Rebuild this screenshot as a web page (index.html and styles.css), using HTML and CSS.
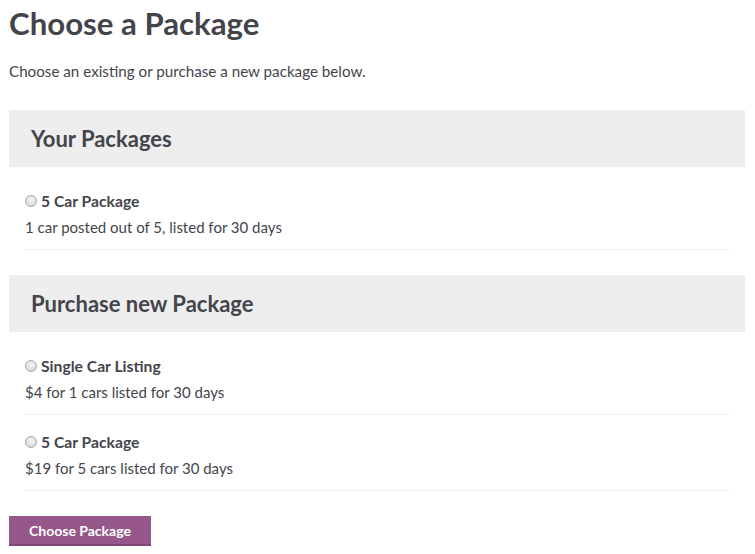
FILE: index.html
```html
<!DOCTYPE html>
<html lang="en">

<head>
    <meta charset="UTF-8">
    <meta name="viewport" content="width=device-width, initial-scale=1.0">
    <title>Choose a Package</title>
    <link rel="stylesheet" href="styles.css">
</head>

<body>

    <div class="page">
        <h1 class="title">Choose a Package</h1>
        <p class="intro">Choose an existing or purchase a new package below.</p>

        <form class="packages">
            <h2 class="box-title">Your Packages</h2>
            <ul class="package-list">
                <li class="package">
                    <label><input type="radio" name="package"> <strong>5 Car Package</strong></label>
                    <div class="desc">1 car posted out of 5, listed for 30 days</div>
                </li>
            </ul>

            <h2 class="box-title">Purchase new Package</h2>
            <ul class="package-list">
                <li class="package">
                    <label><input type="radio" name="package"> <strong>Single Car Listing</strong></label>
                    <div class="desc">$4 for 1 cars listed for 30 days</div>
                </li>
                <li class="package">
                    <label><input type="radio" name="package"> <strong>5 Car Package</strong></label>
                    <div class="desc">$19 for 5 cars listed for 30 days</div>
                </li>
            </ul>

            <button type="button" class="submit">Choose Package</button>
        </form>
    </div>

</body>

</html>
```

FILE: styles.css
```css
body {
    margin: 0;
    font-family: Lato, "Open Sans", sans-serif;
    font-size: 15px;
    color: #43454b;
    background: #fff;
}

.page {
    width: 736px;
    padding: 0 10px 0 9px;
}

.title {
    margin: 0;
    padding-top: 3px;
    font-size: 31.2px;
    line-height: 40px;
    font-weight: 700;
}

.intro {
    margin: 16px 0 26px;
    font-size: 15.2px;
    line-height: 25px;
}

.box-title {
    margin: 0;
    height: 57px;
    line-height: 57px;
    padding: 0 22px;
    background: #eeeeee;
    font-size: 22px;
    font-weight: 700;
}

.package-list {
    list-style: none;
    margin: 0;
    padding: 7px 16px 25px;
}

.package {
    padding: 15px 0 9px;
    border-bottom: 1px solid #eeeeee;
    line-height: 25px;

    label {
        display: flex;
        align-items: center;
        gap: 4px;
        font-size: 15.7px;
    }

    strong {
        font-weight: 700;
    }

    .desc {
        margin-top: 1px;
    }

    input {
        -webkit-appearance: none;
        appearance: none;
        margin: -2px 0 0;
        width: 12px;
        height: 12px;
        border-radius: 50%;
        border: 1px solid #a9a9a9;
        background: radial-gradient(circle at 50% 35%, #f4f4f4, #d2d2d2);
    }
}

.submit {
    display: block;
    border: none;
    border-bottom: 2px solid #7e4874;
    border-radius: 0;
    background: #96588a;
    color: #fff;
    font-family: inherit;
    font-size: 14px;
    font-weight: 700;
    height: 30px;
    padding: 0 20px;
    cursor: pointer;
}
```
